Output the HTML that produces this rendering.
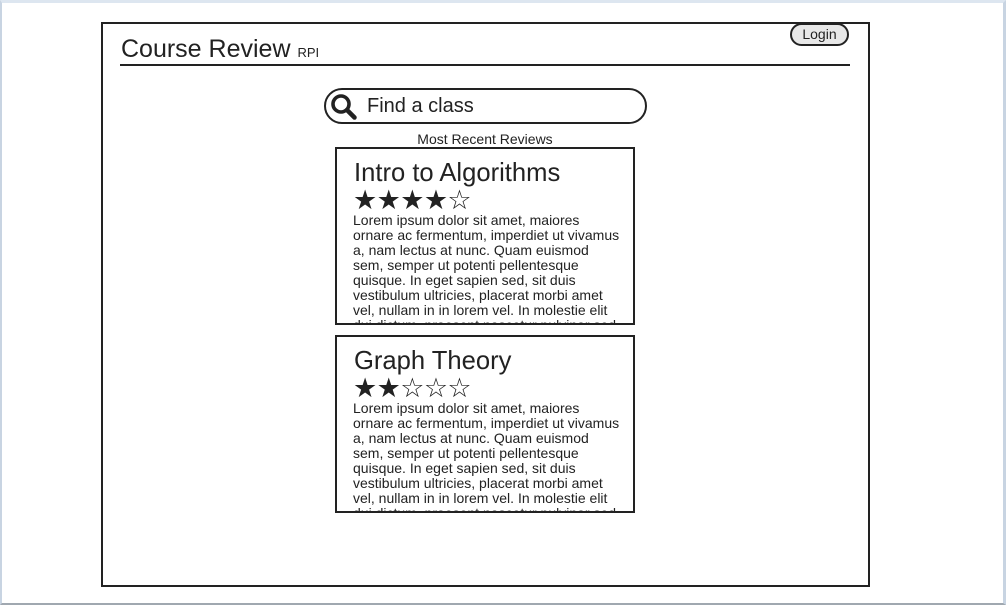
<!DOCTYPE html>
<html><head><style>
*{margin:0;padding:0;box-sizing:border-box}
body{width:1006px;height:605px;background:#fff;position:relative;overflow:hidden;font-family:"Liberation Sans",Arial,sans-serif;color:#222}
.pg{position:absolute;left:0;top:0;width:1006px;height:605px;border-top:3px solid #dde6f0;border-left:2px solid #c8d4e2;border-right:3px solid #c8d4e2;border-bottom:2px solid #a0a8b0}
.frame{position:absolute;left:101px;top:22px;width:769px;height:565px;border:2px solid #222}
.title{position:absolute;left:121px;top:35px;font-size:25px;color:#222;white-space:nowrap}
.title small{font-size:13px}
.hr{position:absolute;left:120px;top:64px;width:730px;height:2px;background:#222}
.login{position:absolute;left:790px;top:23px;width:59px;height:23px;border:2px solid #222;border-radius:12px;background:#e8e8e8;font-size:14px;text-align:center;line-height:19px}
.search{position:absolute;left:324px;top:88px;width:323px;height:36px;border:2px solid #222;border-radius:18px}
.search span{position:absolute;left:41px;top:5px;font-size:20px}
.search svg{position:absolute;left:4px;top:3px}
.mrr{position:absolute;left:335px;width:300px;top:131px;text-align:center;font-size:14px}
.card{position:absolute;left:335px;width:300px;height:178px;border:2px solid #222;overflow:hidden}
.card h2{position:absolute;left:17px;top:10px;font-size:25.6px;font-weight:normal;white-space:nowrap}
.card .st{position:absolute;left:16px;top:36px;font-size:27px;letter-spacing:-0.6px;white-space:nowrap;font-family:"DejaVu Sans",sans-serif}
.card p{position:absolute;left:16px;top:64px;width:267px;font-size:14px;line-height:15px}
</style></head><body>
<div class="pg"></div>
<div class="frame"></div>
<div class="title">Course Review <small>RPI</small></div>
<div class="hr"></div>
<div class="login">Login</div>
<div class="search"><svg width="28" height="28" viewBox="0 0 28 28"><circle cx="11" cy="11" r="8" fill="none" stroke="#222" stroke-width="3.6"/><line x1="17" y1="17" x2="24.5" y2="24.5" stroke="#222" stroke-width="4.5" stroke-linecap="round"/></svg><span>Find a class</span></div>
<div class="mrr">Most Recent Reviews</div>
<div class="card" style="top:147px"><h2>Intro to Algorithms</h2><div class="st">★★★★☆</div><p>Lorem ipsum dolor sit amet, maiores ornare ac fermentum, imperdiet ut vivamus a, nam lectus at nunc. Quam euismod sem, semper ut potenti pellentesque quisque. In eget sapien sed, sit duis vestibulum ultricies, placerat morbi amet vel, nullam in in lorem vel. In molestie elit dui dictum, praesent nascetur pulvinar sed</p></div>
<div class="card" style="top:335px"><h2>Graph Theory</h2><div class="st">★★☆☆☆</div><p>Lorem ipsum dolor sit amet, maiores ornare ac fermentum, imperdiet ut vivamus a, nam lectus at nunc. Quam euismod sem, semper ut potenti pellentesque quisque. In eget sapien sed, sit duis vestibulum ultricies, placerat morbi amet vel, nullam in in lorem vel. In molestie elit dui dictum, praesent nascetur pulvinar sed</p></div>
</body></html>
